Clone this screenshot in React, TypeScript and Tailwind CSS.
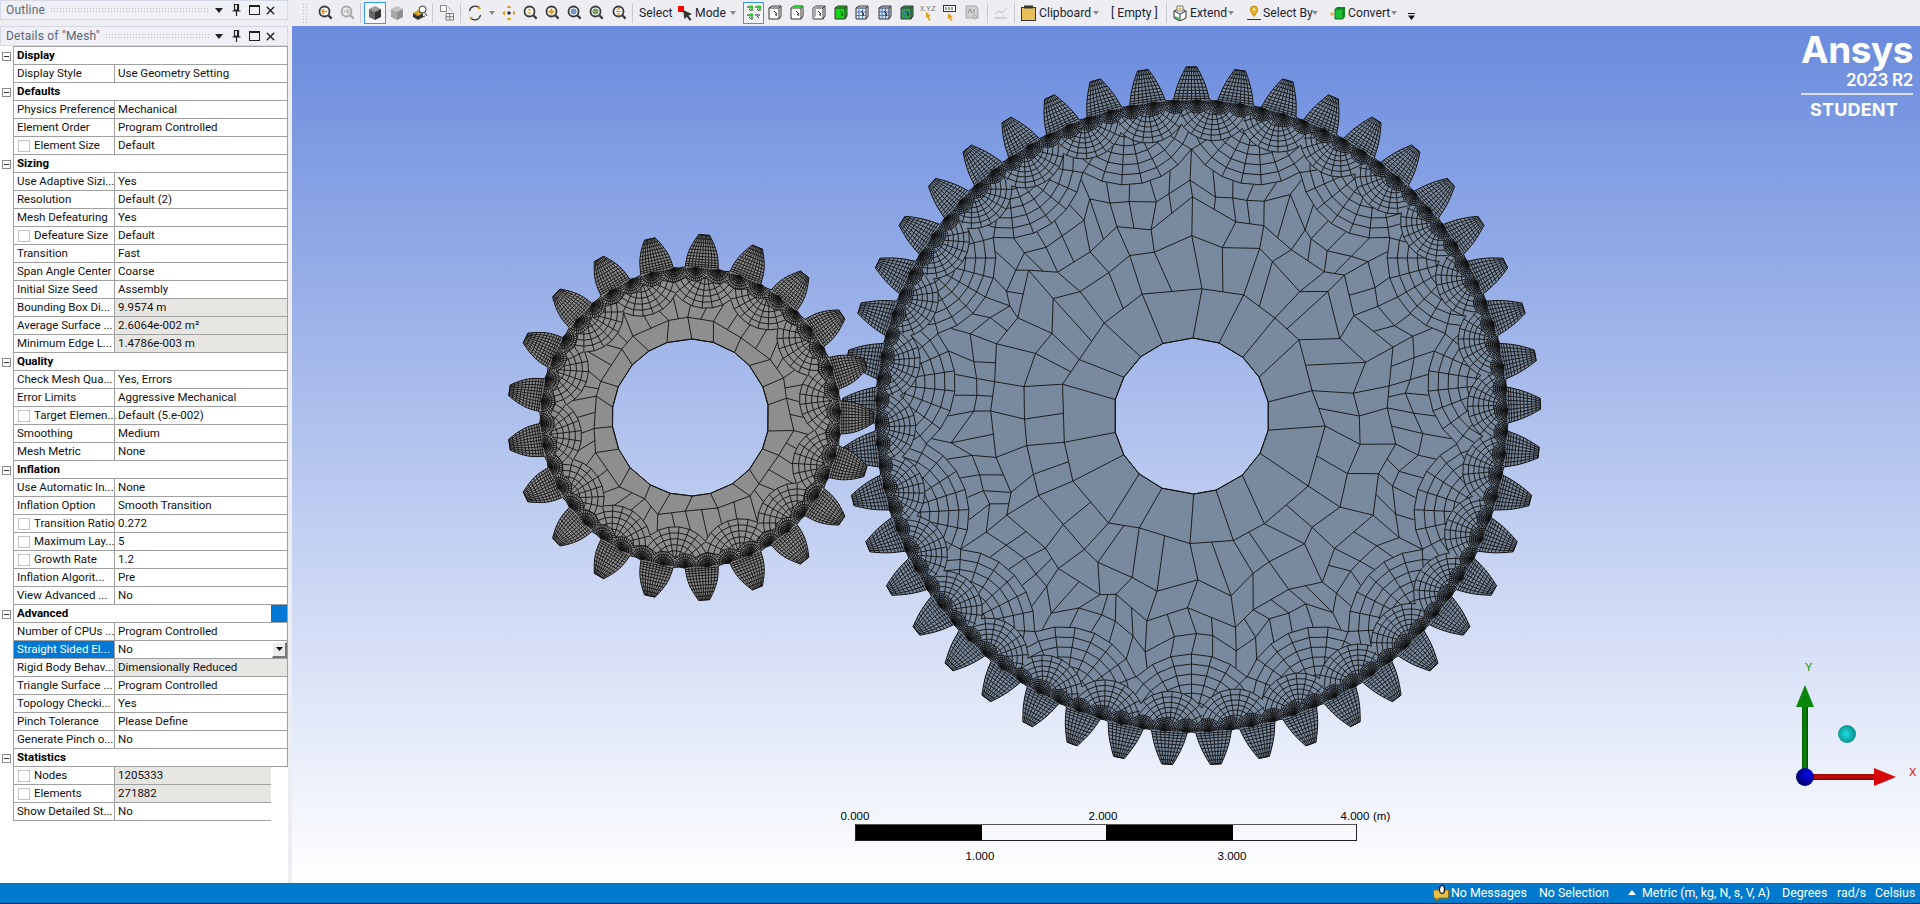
import { ReactNode } from 'react';
import { X } from 'lucide-react';

type Pt = [number, number];
type Tier = { hubs: number; phase: number; step: number; arcs: number[] };
type GearSpec = {
  cx: number; cy: number; rHole: number; rRoot: number; rTip: number; teeth: number; phase: number;
  bw: number; tw: number; bulge: number; nU: number; nV: number;
  tiers: Tier[]; f: number[]; n: number[]; jit: number; seed: number;
};

const RAD = Math.PI / 180;
const fmt = (p: Pt) => `${p[0].toFixed(1)} ${p[1].toFixed(1)}`;
const noise = (a: number, b: number) => {
  const s = Math.sin(a * 127.1 + b * 311.7) * 43758.5453;
  return (s - Math.floor(s)) * 2 - 1;
};
const wrap = (d: number) => ((d + 540) % 360) - 180;

function buildGear(g: GearSpec) {
  const pitch = 360 / g.teeth;
  const H = g.rTip - g.rRoot;
  const polar = (r: number, th: number): Pt => [g.cx + r * Math.sin(th * RAD), g.cy - r * Math.cos(th * RAD)];
  const toothPt = (k: number, u: number, v: number): Pt => {
    const th = (k * pitch + g.phase) * RAD;
    const w = g.bw + (g.tw - g.bw) * v + g.bulge * Math.sin(Math.PI * v);
    const r = g.rRoot + H * v;
    const t = u * w;
    return [g.cx + r * Math.sin(th) + t * Math.cos(th), g.cy - r * Math.cos(th) + t * Math.sin(th)];
  };

  // outer contour
  const contour: Pt[] = [];
  for (let k = 0; k < g.teeth; k++) {
    for (let s = 0; s <= 8; s++) contour.push(toothPt(k, -1, s / 8));
    for (let s = 8; s >= 0; s--) contour.push(toothPt(k, 1, s / 8));
    contour.push(polar(g.rRoot, (k + 0.5) * pitch + g.phase));
  }

  // lower edge of a tier of fans
  const edge = (t: Tier, th: number) => {
    const hp = 360 / t.hubs;
    const a = t.arcs[t.arcs.length - 1];
    const phi = wrap(((th - t.phase + hp / 2 + 3600) % hp) - hp / 2) * RAD;
    const s = g.rRoot * Math.sin(phi);
    return g.rRoot * Math.cos(phi) - Math.sqrt(Math.max(0, a * a - s * s));
  };

  // fans around points of the root circle, finer near the rim
  let fans = '';
  g.tiers.forEach((t, ti) => {
    const hp = 360 / t.hubs;
    const outer = (th: number) => (ti === 0 ? g.rRoot : edge(g.tiers[ti - 1], th));
    const half = Math.round(90 / t.step);
    for (let h = 0; h < t.hubs; h++) {
      const thH = t.phase + h * hp;
      const hub = polar(g.rRoot, thH);
      const er: Pt = [Math.sin(thH * RAD), -Math.cos(thH * RAD)];
      const et: Pt = [Math.cos(thH * RAD), Math.sin(thH * RAD)];
      const at = (a: number, alpha: number): Pt => [
        hub[0] + a * (-er[0] * Math.cos(alpha * RAD) + et[0] * Math.sin(alpha * RAD)),
        hub[1] + a * (-er[1] * Math.cos(alpha * RAD) + et[1] * Math.sin(alpha * RAD)),
      ];
      const inside = (p: Pt) => {
        const dx = p[0] - g.cx;
        const dy = p[1] - g.cy;
        const th = Math.atan2(dx, -dy) / RAD;
        return Math.hypot(dx, dy) <= outer(th) + 0.01 && Math.abs(wrap(th - thH)) <= hp / 2;
      };
      const cross = (a: Pt, b: Pt) => {
        let lo = a;
        let hi = b;
        for (let i = 0; i < 9; i++) {
          const m: Pt = [(lo[0] + hi[0]) / 2, (lo[1] + hi[1]) / 2];
          if (inside(m)) lo = m;
          else hi = m;
        }
        return lo;
      };
      const addClipped = (pts: Pt[]) => {
        let run: Pt[] = [];
        const flush = () => {
          if (run.length > 1) fans += `M${run.map(fmt).join('L')}`;
          run = [];
        };
        pts.forEach((p, i) => {
          const inP = inside(p);
          if (i > 0) {
            const q = pts[i - 1];
            const inQ = inside(q);
            if (inP && !inQ) run.push(cross(p, q));
            if (!inP && inQ) {
              run.push(cross(q, p));
              flush();
            }
          }
          if (inP) run.push(p);
        });
        flush();
      };
      t.arcs.forEach((a) => {
        const pts: Pt[] = [];
        for (let i = -half; i <= half; i++) pts.push(at(a, i * t.step));
        addClipped(pts);
      });
      const amax = t.arcs[t.arcs.length - 1];
      for (let i = -half; i <= half; i++) {
        addClipped([at(0.2, i * t.step), at(amax * 0.33, i * t.step), at(amax * 0.66, i * t.step), at(amax, i * t.step)]);
      }
    }
  });

  // inner rings, they end on the lower edge of the last tier
  const lastTier = g.tiers[g.tiers.length - 1];
  const node = (k: number, i: number): Pt => {
    const n = g.n[k];
    const last = k === g.n.length - 1;
    const cell = 360 / n;
    const th = i * cell + (last ? 0 : noise(k + g.seed, i) * cell * (k === 0 ? 0.12 : 0.3));
    const base = g.rHole + g.f[k] * (edge(lastTier, th) - g.rHole);
    const r = base + (k === 0 || last ? 0 : noise(i + g.seed, k * 3 + 1) * g.jit);
    return polar(r, th);
  };
  let rings = '';
  g.n.forEach((n, k) => {
    const pts: Pt[] = [];
    for (let i = 0; i < n; i++) pts.push(node(k, i));
    // the last ring lies on the last arc of the fans, no need to draw it twice
    if (k < g.n.length - 1) rings += `M${pts.map(fmt).join('L')}Z`;
    if (k === 0) return;
    const prev = g.n[k - 1];
    for (let i = 0; i < n; i++) {
      let from: Pt;
      if (n === prev) from = node(k - 1, i);
      else if (i % 2 === 0) from = node(k - 1, i / 2);
      else {
        const a = node(k - 1, (i - 1) / 2);
        const b = node(k - 1, ((i + 1) / 2) % prev);
        from = [(a[0] + b[0]) / 2, (a[1] + b[1]) / 2];
      }
      rings += `M${fmt(from)}L${fmt(node(k, i))}`;
    }
  });
  const hole: Pt[] = [];
  for (let i = 0; i < g.n[0]; i++) hole.push(node(0, i));

  // mesh of the teeth
  let teeth = '';
  for (let k = 0; k < g.teeth; k++) {
    for (let j = 1; j <= g.nV; j++) {
      const v = Math.pow(j / g.nV, 1.35);
      const pts: Pt[] = [];
      for (let s = 0; s <= g.nU; s++) pts.push(toothPt(k, -1 + (2 * s) / g.nU, v));
      teeth += `M${pts.map(fmt).join('L')}`;
    }
    for (let s = 1; s < g.nU; s++) {
      const pts: Pt[] = [];
      for (let j = 0; j <= g.nV; j++) pts.push(toothPt(k, -1 + (2 * s) / g.nU, Math.pow(j / g.nV, 1.35)));
      teeth += `M${pts.map(fmt).join('L')}`;
    }
  }

  return { body: `M${contour.map(fmt).join('L')}ZM${hole.map(fmt).join('L')}Z`, mesh: rings + fans + teeth };
}

const bigGear = buildGear({
  cx: 1191.5, cy: 416, rHole: 78, rRoot: 316, rTip: 349, teeth: 45, phase: 0,
  bw: 18, tw: 5.5, bulge: 1.5, nU: 8, nV: 10,
  tiers: [
    { hubs: 90, phase: 1, step: 10, arcs: [2, 3.5, 5, 7, 9, 11, 13] },
    { hubs: 30, phase: 4, step: 15, arcs: [9, 14, 19, 24, 29, 34.5, 40] },
    { hubs: 15, phase: 12, step: 15, arcs: [30, 39, 48, 58, 68, 78] },
  ],
  f: [0, 0.3, 0.55, 0.73, 0.87, 1], n: [18, 18, 36, 36, 72, 72], jit: 5, seed: 3,
});
const smallGear = buildGear({
  cx: 690.5, cy: 417.5, rHole: 78.5, rRoot: 150, rTip: 183, teeth: 21, phase: 90,
  bw: 16.5, tw: 5.5, bulge: 2.8, nU: 10, nV: 11,
  tiers: [
    { hubs: 42, phase: 2, step: 10, arcs: [2, 4, 6, 8, 10.5, 13.5] },
    { hubs: 14, phase: 6, step: 15, arcs: [10, 16, 22, 28, 34, 40] },
  ],
  f: [0, 0.55, 1], n: [22, 22, 44], jit: 3, seed: 11,
});

type Row = { name: string; value?: string; check?: boolean; grey?: boolean; section?: boolean; short?: boolean; active?: boolean; bar?: boolean };

const rows: Row[] = [
  { name: 'Display', section: true },
  { name: 'Display Style', value: 'Use Geometry Setting' },
  { name: 'Defaults', section: true },
  { name: 'Physics Preference', value: 'Mechanical' },
  { name: 'Element Order', value: 'Program Controlled' },
  { name: 'Element Size', value: 'Default', check: true },
  { name: 'Sizing', section: true },
  { name: 'Use Adaptive Sizi...', value: 'Yes' },
  { name: 'Resolution', value: 'Default (2)' },
  { name: 'Mesh Defeaturing', value: 'Yes' },
  { name: 'Defeature Size', value: 'Default', check: true },
  { name: 'Transition', value: 'Fast' },
  { name: 'Span Angle Center', value: 'Coarse' },
  { name: 'Initial Size Seed', value: 'Assembly' },
  { name: 'Bounding Box Di...', value: '9.9574 m', grey: true },
  { name: 'Average Surface ...', value: '2.6064e-002 m²', grey: true },
  { name: 'Minimum Edge L...', value: '1.4786e-003 m', grey: true },
  { name: 'Quality', section: true },
  { name: 'Check Mesh Qua...', value: 'Yes, Errors' },
  { name: 'Error Limits', value: 'Aggressive Mechanical' },
  { name: 'Target Elemen...', value: 'Default (5.e-002)', check: true },
  { name: 'Smoothing', value: 'Medium' },
  { name: 'Mesh Metric', value: 'None' },
  { name: 'Inflation', section: true },
  { name: 'Use Automatic In...', value: 'None' },
  { name: 'Inflation Option', value: 'Smooth Transition' },
  { name: 'Transition Ratio', value: '0.272', check: true },
  { name: 'Maximum Lay...', value: '5', check: true },
  { name: 'Growth Rate', value: '1.2', check: true },
  { name: 'Inflation Algorit...', value: 'Pre' },
  { name: 'View Advanced ...', value: 'No' },
  { name: 'Advanced', section: true, bar: true },
  { name: 'Number of CPUs ...', value: 'Program Controlled' },
  { name: 'Straight Sided El...', value: 'No', active: true },
  { name: 'Rigid Body Behav...', value: 'Dimensionally Reduced', grey: true },
  { name: 'Triangle Surface ...', value: 'Program Controlled' },
  { name: 'Topology Checki...', value: 'Yes' },
  { name: 'Pinch Tolerance', value: 'Please Define' },
  { name: 'Generate Pinch o...', value: 'No' },
  { name: 'Statistics', section: true },
  { name: 'Nodes', value: '1205333', check: true, grey: true, short: true },
  { name: 'Elements', value: '271882', check: true, grey: true, short: true },
  { name: 'Show Detailed St...', value: 'No', short: true },
];

function PanelHeader({ title }: { title: string }) {
  return (
    <div className="flex h-5 w-[288px] items-center border border-[#d6d8e4] bg-[#eef0f6] pl-[5px] pr-[10px] text-[12px] tracking-[0.2px] text-[#5d6675]">
      <span className="mr-[5px] whitespace-nowrap">{title}</span>
      <div className="h-[7px] flex-1 bg-[radial-gradient(#b4b6c0_0.7px,transparent_0.8px)] bg-[length:3px_3px]" />
      <svg width="8" height="5" viewBox="0 0 8 5" className="ml-[5px]"><path d="M0 0h8L4 5z" fill="#222" /></svg>
      <svg width="9" height="12" viewBox="0 0 9 12" className="ml-[9px]">
        <path d="M2.5 0.5h4v5.5h-4zM0.5 7h8M4.5 7v5" fill="none" stroke="#222" strokeWidth="1.2" />
        <path d="M5 1h1.5v5H5z" fill="#222" />
      </svg>
      <div className="ml-[8px] h-[10px] w-[11px] border border-t-2 border-[#222]" />
      <X size={13} strokeWidth={2.6} className="ml-[4px] text-[#222]" />
    </div>
  );
}

function PropertyRow({ row }: { row: Row }) {
  if (row.section) {
    return (
      <div className="flex h-[18px]">
        <div className="flex w-[13px] items-center justify-start pl-[2px]">
          <div className="flex h-[9px] w-[9px] items-center justify-center border border-[#8a8a8a] bg-white">
            <div className="h-px w-[5px] bg-[#333]" />
          </div>
        </div>
        <div className="flex w-[275px] items-center border-x border-b border-[#a0a0a0] pl-[3px] font-bold text-black">
          <span className="flex-1">{row.name}</span>
          {row.bar && <div className="h-[17px] w-[16px] bg-[#0078d4]" />}
        </div>
      </div>
    );
  }
  return (
    <div className="flex h-[18px]">
      <div className="w-[13px]" />
      <div className={`flex border-b border-l border-[#a0a0a0] ${row.short ? 'w-[258px]' : 'w-[275px] border-r'}`}>
        <div
          className={`flex w-[100px] shrink-0 items-center whitespace-nowrap pl-[3px] ${
            row.active ? 'bg-[#0078d4] text-white' : 'text-[#111]'
          }`}
        >
          {row.check && <div className="ml-[1px] mr-[4px] h-[12px] w-[12px] shrink-0 border border-[#c4c4c4] bg-white" />}
          {row.name}
        </div>
        <div
          className={`flex flex-1 items-center whitespace-nowrap border-l border-[#a0a0a0] pl-[3px] text-[#111] ${
            row.grey ? 'bg-[#e8e6e3]' : ''
          }`}
        >
          <span className="flex-1">{row.value}</span>
          {row.active && (
            <div className="flex h-[16px] w-[15px] items-center justify-center border-b-2 border-r-2 border-t border-l border-b-[#777] border-r-[#777] border-t-white border-l-white bg-[#ececec]">
              <svg width="7" height="4" viewBox="0 0 7 4"><path d="M0 0h7L3.500 4z" fill="#111" /></svg>
            </div>
          )}
        </div>
      </div>
    </div>
  );
}

const Sep = ({ className }: { className: string }) => <div className={`h-[20px] w-px shrink-0 bg-[#c8c8d0] ${className}`} />;
const Caret = ({ className }: { className: string }) => (
  <svg width="6" height="4" viewBox="0 0 6 4" className={`shrink-0 ${className}`}><path d="M0 0h6L3 4z" fill="#8a8a8a" /></svg>
);

function Ico({ w, className, children }: { w: number; className: string; children: ReactNode }) {
  return (
    <svg width={w} height="16" viewBox={`0 0 ${w} 16`} className={`shrink-0 ${className}`}>
      {children}
    </svg>
  );
}

const Lens = ({ dim, children }: { dim?: boolean; children?: ReactNode }) => (
  <>
    <circle cx="6.5" cy="6.500" r="5" fill={dim ? '#eee' : '#fff'} stroke={dim ? '#a8a8a8' : '#3a3a3a'} strokeWidth="1.8" />
    <path d="M10.500 10.500l3.200 3.200" stroke={dim ? '#a8a8a8' : '#3a3a3a'} strokeWidth="2.400" />
    {children}
  </>
);

const Cube = ({ top, side, front }: { top: string; side: string; front: string }) => (
  <>
    <path d="M7 1l6 3-6 3-6-3z" fill={top} />
    <path d="M1 4l6 3v8l-6-3z" fill={front} />
    <path d="M13 4l-6 3v8l6-3z" fill={side} />
  </>
);

const Sel = ({ fill, children }: { fill?: string; children?: ReactNode }) => (
  <>
    <path d="M1 3l3-2h9v10l-2 3H1z" fill={fill ?? '#fff'} stroke="#333" />
    <path d="M1 3h10v11M11 3l2-2" fill="none" stroke="#333" />
    {children}
    <path d="M6 6l3 3-1.500 0.300 1 1.700" fill="none" stroke="#222" />
  </>
);
const Grid = () => <path d="M4 3v11M7.500 3v11M1 7h10M1 10.500h10" stroke="#3d6fb5" strokeWidth="0.900" fill="none" />;

function Toolbar() {
  return (
    <div className="flex h-[26px] shrink-0 items-center bg-[#eeeef2] text-[12.2px] text-[#1b2433]">
      <div className="ml-[10px] h-[20px] w-[5px] bg-[radial-gradient(#b4b6c0_0.7px,transparent_0.8px)] bg-[length:3px_3px]" />
      <Ico w={14} className="ml-[11px]"><Lens><path d="M3.500 6.500h6M3.500 6.500l2.500-2.500M3.500 6.500l2.500 2.500" stroke="#d99a1c" strokeWidth="1.500" fill="none" /></Lens></Ico>
      <Ico w={14} className="ml-[8px]"><Lens dim><path d="M9.500 6.500h-6M9.500 6.500l-2.500-2.500M9.500 6.500l-2.500 2.500" stroke="#bbb" strokeWidth="1.500" fill="none" /></Lens></Ico>
      <Sep className="ml-[6px]" />
      <div className="ml-[3px] flex h-[22px] w-[22px] shrink-0 items-center justify-center border border-[#3399ff] bg-[#f4f6fb]">
        <Ico w={14} className=""><Cube top="#9a9a9a" side="#333" front="#666" /></Ico>
      </div>
      <Ico w={14} className="ml-[4px]"><Cube top="#c4c4c4" side="#8e8e8e" front="#a8a8a8" /></Ico>
      <Ico w={16} className="ml-[8px]">
        <path d="M1 8l5-3 5 3-5 3z" fill="#d9a21c" /><path d="M1 8l5 3v4l-5-3zM11 8l-5 3v4l5-3z" fill="#333" />
        <circle cx="10.500" cy="4.500" r="3.500" fill="#fff" stroke="#333" /><path d="M8 13l5-2M13 8l2 3" stroke="#444" fill="none" />
      </Ico>
      <Sep className="ml-[4px]" />
      <Ico w={14} className="ml-[7px]">
        <rect x="0.500" y="0.500" width="6" height="6" fill="#fafafa" stroke="#888" />
        <path d="M6 8.500h7.500v6.500H6zM9.750 8.500v6.500M6 11.750h7.500" fill="#fafafa" stroke="#777" /><path d="M8 2l4 4" stroke="#aaa" />
      </Ico>
      <Sep className="ml-[6px]" />
      <Ico w={14} className="ml-[7px]">
        <path d="M1.500 6a5.800 5.800 0 0 1 10-3" fill="none" stroke="#333" strokeWidth="1.300" /><path d="M12.500 10a5.800 5.800 0 0 1-10 3" fill="none" stroke="#333" strokeWidth="1.300" />
        <path d="M11 1l2 3-3.500 0.300zM3 15l-2-3 3.500-0.300z" fill="#d9a21c" />
      </Ico>
      <Caret className="ml-[7px]" />
      <Ico w={14} className="ml-[7px]"><path d="M7 0l2.500 3h-5zM7 16l-2.500-3h5zM0 8l3-2.500v5zM14 8l-3 2.500v-5z" fill="#d9a21c" /><circle cx="7" cy="8" r="1.800" fill="#333" /></Ico>
      <Ico w={14} className="ml-[7px]"><Lens><path d="M6.500 3.500l2 2h-4zM6.500 9.500l-2-2h4z" fill="#d99a1c" /></Lens></Ico>
      <Ico w={14} className="ml-[8px]"><Lens><path d="M3.500 6.500h6M6.500 3.500v6" stroke="#d99a1c" strokeWidth="2" /></Lens></Ico>
      <Ico w={14} className="ml-[8px]"><Lens><circle cx="6.500" cy="6.500" r="3" fill="#6f98c8" /></Lens></Ico>
      <Ico w={14} className="ml-[8px]"><Lens><circle cx="6.500" cy="6.500" r="3" fill="#5a9c72" /><circle cx="6.500" cy="6.500" r="1.200" fill="#d99a1c" /></Lens></Ico>
      <Ico w={14} className="ml-[9px]"><Lens><path d="M6.500 2.800l2 2h-4zM6.500 10.200l-2-2h4z" fill="#d99a1c" /><path d="M4 6.500h5" stroke="#d99a1c" /></Lens></Ico>
      <Sep className="ml-[6px]" />
      <span className="ml-[6px] w-[31px] shrink-0 whitespace-nowrap">Select</span>
      <Ico w={15} className="ml-[8px]"><rect x="0" y="1" width="6" height="6" fill="#f00" /><path d="M5 5l9 4-3.500 1.500 3 4-1.800 1.200-3-4-2.200 2.500z" fill="#333" /></Ico>
      <span className="ml-[2px] w-[32px] shrink-0">Mode</span>
      <Caret className="ml-[3px]" />
      <div className="ml-[7px] flex h-[22px] w-[21px] shrink-0 items-center justify-center border border-[#3399ff] bg-[#f4f6fb]">
        <Ico w={15} className="">
          <path d="M1 2h5v4M9 2h5v4M1 10h5v5M9 10h5" fill="none" stroke="#222" />
          <path d="M3 0.500h4v3H3zM11 0.500h4v3h-4zM3 8.500h4v3H3z" fill="#1ed81e" /><path d="M3 4l2 2M11 4l2 2M3 12l2 2M11 11l2 2" stroke="#333" />
        </Ico>
      </div>
      <Ico w={14} className="ml-[4px]"><Sel /></Ico>
      <Ico w={14} className="ml-[8px]"><Sel><path d="M1 3l3-2h9l-2 2z" fill="#1ed81e" /></Sel></Ico>
      <Ico w={14} className="ml-[8px]"><Sel><path d="M1 14V3l3-2v10z" fill="#aaa" /></Sel></Ico>
      <Ico w={14} className="ml-[8px]"><Sel fill="#18d418" /></Ico>
      <Ico w={14} className="ml-[7px]"><Sel fill="#e8eef8"><Grid /></Sel></Ico>
      <Ico w={14} className="ml-[9px]"><Sel fill="#c8dcf0"><Grid /></Sel></Ico>
      <Ico w={14} className="ml-[8px]"><Sel fill="#30a050"><Grid /></Sel></Ico>
      <div className="relative ml-[7px] h-[16px] w-[14px] shrink-0">
        <span className="absolute -left-px -top-[1px] whitespace-nowrap font-['Liberation_Sans',sans-serif] text-[6.500px] text-[#666]">X.Y.Z</span>
        <svg width="14" height="16" viewBox="0 0 14 16" className="absolute left-0 top-0"><path d="M5 7l5 4-2 0.500 1.500 4-1.500 0.500-1.500-4-1.500 1.500z" fill="#d9a21c" /></svg>
      </div>
      <Ico w={14} className="ml-[8px]"><rect x="0.500" y="0.500" width="12" height="6" fill="#fff" stroke="#333" /><path d="M3 2v3M6 2v3M9 2v3" stroke="#333" /><path d="M5 8l5 4-2 0.500 1.500 3-1.500 0.500-1.500-3-1.500 1.500z" fill="#d9a21c" /></Ico>
      <Ico w={14} className="ml-[8px]"><path d="M1 1h10l2 3v9H1z" fill="#d0d0d0" stroke="#aaa" /><path d="M3 8l2-4 2 4M9 4v4" stroke="#888" fill="none" /><circle cx="10" cy="12" r="2" fill="#ccc" stroke="#aaa" /></Ico>
      <Sep className="ml-[8px]" />
      <Ico w={14} className="ml-[6px]"><path d="M1 9l4-3 3 2 5-5" fill="none" stroke="#c0c0c0" /><path d="M1 13h12" stroke="#bbb" /><circle cx="3" cy="13" r="1.200" fill="#ccc" /><circle cx="10" cy="13" r="1.200" fill="#ccc" /></Ico>
      <Sep className="ml-[6px]" />
      <Ico w={15} className="ml-[6px]"><rect x="0.500" y="2.500" width="14" height="13" fill="#e8bf5a" stroke="#333" /><rect x="3" y="0.500" width="9" height="3" fill="#333" /></Ico>
      <span className="ml-[3px] w-[52px] shrink-0">Clipboard</span>
      <Caret className="ml-[2px]" />
      <span className="ml-[12px] w-[47px] shrink-0 whitespace-nowrap">[ Empty ]</span>
      <Sep className="ml-[8px]" />
      <Ico w={14} className="ml-[6px]"><path d="M1 6l6-3 6 3v7l-6 3-6-3z" fill="#fff" stroke="#333" /><path d="M1 6l6 3 6-3M7 9v7" fill="none" stroke="#333" /><path d="M4 1h6v5H4z" fill="#fff" stroke="#777" /><path d="M5.500 3.500h3M7 2v3" stroke="#d9a21c" /><path d="M2 11l4 2v2l-4-2z" fill="#35b050" /></Ico>
      <span className="ml-[3px] w-[35px] shrink-0">Extend</span>
      <Caret className="ml-[3px]" />
      <Ico w={14} className="ml-[13px]"><path d="M7 1a3.600 3.600 0 0 1 3.600 3.600C10.600 7 7 11.500 7 11.500S3.400 7 3.400 4.600A3.600 3.600 0 0 1 7 1z" fill="#e8b01c" stroke="#c08a10" /><circle cx="7" cy="4.500" r="1.200" fill="#fff" /><path d="M0 14.500h14" stroke="#333" /></Ico>
      <span className="ml-[2px] w-[47px] shrink-0 whitespace-nowrap">Select By</span>
      <Caret className="ml-[2px]" />
      <Ico w={15} className="ml-[12px]"><path d="M0 9h4M2 7v4" stroke="#d9a21c" /><path d="M5 4h8v10H5z" fill="#18c030" stroke="#1c6a2a" /><path d="M5 4l2-2h8l-2 2zM13 4l2-2v10l-2 2z" fill="#0c8a20" /></Ico>
      <span className="ml-[3px] w-[41px] shrink-0">Convert</span>
      <Caret className="ml-[2px]" />
      <svg width="7" height="8" viewBox="0 0 7 8" className="ml-[11px] mt-[8px] shrink-0"><path d="M0 2.500h7L3.500 7z M0 0h7v1H0z" fill="#111" /></svg>
    </div>
  );
}

function GearViews() {
  return (
    <svg className="absolute inset-0" width="1628" height="857" viewBox="292 26 1628 857" fill="none">
      <defs>
        <radialGradient id="cyanBall" cx="45%" cy="50%" r="55%">
          <stop offset="0%" stopColor="#1ee0e0" />
          <stop offset="100%" stopColor="#078c8c" />
        </radialGradient>
        <radialGradient id="blueBall" cx="65%" cy="35%" r="65%">
          <stop offset="0%" stopColor="#0a0af0" />
          <stop offset="100%" stopColor="#000070" />
        </radialGradient>
        <linearGradient id="shaftY" x1="0" x2="1" y1="0" y2="0">
          <stop offset="0%" stopColor="#0a5a0a" /><stop offset="50%" stopColor="#0a8c0a" /><stop offset="100%" stopColor="#064a06" />
        </linearGradient>
        <linearGradient id="shaftX" x1="0" x2="0" y1="0" y2="1">
          <stop offset="0%" stopColor="#8c0a0a" /><stop offset="50%" stopColor="#d00c0c" /><stop offset="100%" stopColor="#700808" />
        </linearGradient>
      </defs>
      <path d={bigGear.body} fill="#7a8a9e" fillRule="evenodd" />
      <path d={bigGear.mesh} stroke="#111" strokeWidth="0.9" />
      <path d={bigGear.body} stroke="#111" strokeWidth="1" />
      <path d={smallGear.body} fill="#8e8e8e" fillRule="evenodd" />
      <path d={smallGear.mesh} stroke="#111" strokeWidth="0.9" />
      <path d={smallGear.body} stroke="#111" strokeWidth="1" />
      <circle cx="1847" cy="734" r="9" fill="url(#cyanBall)" />
      <rect x="1802" y="705" width="6" height="72" fill="url(#shaftY)" />
      <path d="M1805 685l9 22h-18z" fill="#0a860a" />
      <rect x="1805" y="774" width="70" height="6" fill="url(#shaftX)" />
      <path d="M1874 768l22 9-22 9z" fill="#d80808" />
      <circle cx="1805" cy="777" r="9" fill="url(#blueBall)" />
    </svg>
  );
}

function ScaleBar() {
  const label = "absolute -translate-x-1/2 whitespace-nowrap font-['Liberation_Sans',sans-serif] text-[11.500px] leading-none text-black";
  return (
    <div className="absolute left-[563px] top-[798px] w-[502px]">
      <span className={`${label} left-0 -top-[13px]`}>0.000</span>
      <span className={`${label} left-[248px] -top-[13px]`}>2.000</span>
      <span className={`${label} left-[500px] -top-[13px]`}>4.000</span>
      <span className="absolute left-[518px] -top-[13px] whitespace-nowrap font-['Liberation_Sans',sans-serif] text-[11.500px] leading-none text-black">(m)</span>
      <div className="flex h-[17px] border border-[#222] border-t-[#555]">
        <div className="w-[126px] bg-black" />
        <div className="w-[124px] bg-[#f6f8fd]" />
        <div className="w-[127px] bg-black" />
        <div className="flex-1 bg-[#f8f9fd]" />
      </div>
      <span className={`${label} left-[125px] top-[27px]`}>1.000</span>
      <span className={`${label} left-[377px] top-[27px]`}>3.000</span>
    </div>
  );
}

export default function App() {
  return (
    <div className="flex h-[904px] w-[1920px] flex-col overflow-hidden bg-white font-['Roboto',sans-serif] text-[11.5px]">
      <div className="flex h-[883px]">
        <aside className="flex w-[292px] shrink-0 flex-col border-r-[4px] border-[#eeeef2] bg-white">
          <PanelHeader title="Outline" />
          <div className="h-[6px] w-[288px] bg-[#eeeef2]" />
          <PanelHeader title={'Details of "Mesh"'} />
          <div className="ml-[13px] h-px w-[275px] bg-[#a0a0a0]" />
          {rows.map((row) => (
            <PropertyRow key={row.name} row={row} />
          ))}
        </aside>
        <div className="flex min-w-0 flex-1 flex-col">
          <Toolbar />
          <main className="relative flex-1 bg-[linear-gradient(to_bottom,#6a8bdd,#ffffff)]">
            <GearViews />
            <ScaleBar />
            <div className="absolute right-[7px] top-[4px] flex w-[112px] flex-col items-end font-['Inter',sans-serif] font-semibold text-white">
              <span className="text-[37px] font-bold leading-[40px] tracking-[-0.5px]">Ansys</span>
              <span className="text-[17px] leading-[20px] tracking-[-0.3px]">2023 R2</span>
              <div className="mt-[3px] h-[2px] w-full bg-white/70" />
              <span className="mr-[15px] mt-[5px] text-[18px] font-bold leading-[20px] tracking-[0.2px]">STUDENT</span>
            </div>
            <span className="absolute left-[1513px] top-[636px] font-['Liberation_Sans',sans-serif] text-[11px] leading-none text-[#0a9a0a]">Y</span>
            <span className="absolute left-[1617px] top-[741px] font-['Liberation_Sans',sans-serif] text-[11px] leading-none text-[#e00000]">X</span>
          </main>
        </div>
      </div>
      <footer className="flex h-[21px] items-center border-b border-[#1f2933] bg-[#007acc] text-[12.4px] text-white">
        <div className="ml-[1433px] flex shrink-0 items-center">
          <svg width="16" height="16" viewBox="0 0 16 16" className="shrink-0">
            <path d="M0.500 5h15v8H6l-3 3v-3H0.500z" fill="#e8c048" stroke="#8a6a10" />
            <ellipse cx="9" cy="4.500" rx="2.500" ry="4" fill="#fff" stroke="#111" strokeWidth="1.200" />
          </svg>
          <span className="ml-[2px] w-[88px] shrink-0">No Messages</span>
          <span className="w-[89px] shrink-0">No Selection</span>
          <svg width="8" height="5" viewBox="0 0 8 5" className="shrink-0"><path d="M0 5h8L4 0z" fill="#fff" /></svg>
          <span className="ml-[6px] w-[140px] shrink-0 whitespace-nowrap">Metric (m, kg, N, s, V, A)</span>
          <span className="w-[55px] shrink-0">Degrees</span>
          <span className="w-[38px] shrink-0">rad/s</span>
          <span>Celsius</span>
        </div>
      </footer>
    </div>
  );
}
